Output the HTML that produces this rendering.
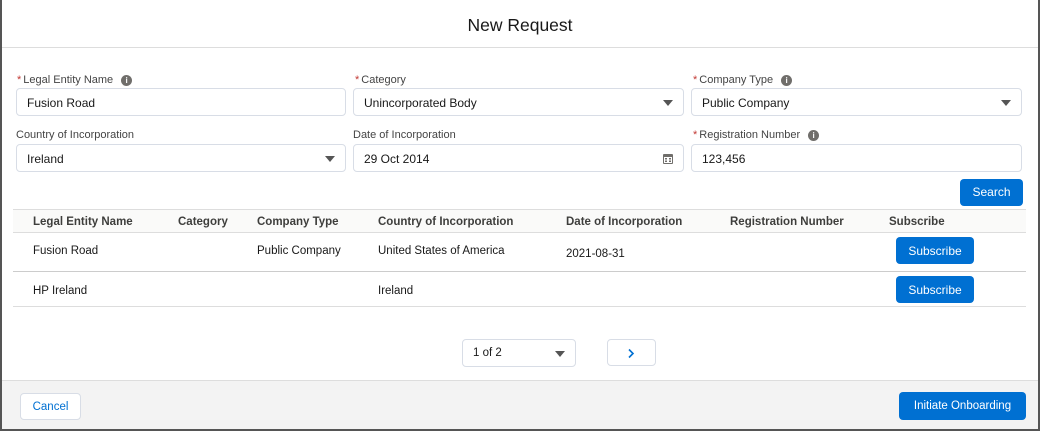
<!DOCTYPE html><html><head><style>
*{box-sizing:border-box;margin:0;padding:0}
body{width:1045px;height:436px;background:#fff;font-family:"Liberation Sans",sans-serif;position:relative;overflow:hidden;color:#3e3e3c}
.a{position:absolute}
.frame{left:0;top:0;width:1040px;height:431px;border:1px solid #555;border-width:0 2px 2px 2px}
.lbl{font-size:11px;color:#444}
.req{color:#c23934;margin-right:2px}
.in{height:28px;border:1px solid #d8dde6;border-radius:4px;font-size:12px;color:#181818;padding:7px 10px;background:#fff}
.info{display:inline-block;width:11px;height:11px;border-radius:50%;background:#706e6b;color:#fff;font-size:8px;font-weight:bold;text-align:center;line-height:11px;margin-left:8px;vertical-align:0}
.tri{position:absolute;right:10px;top:11px;width:0;height:0;border-left:5px solid transparent;border-right:5px solid transparent;border-top:6px solid #555}
.btn{background:#0070d2;color:#fff;border-radius:4px;font-size:12px;text-align:center}
.th{font-size:11.5px;font-weight:bold;color:#3e3e3c;top:216px}
.td{font-size:11.5px;color:#181818}
</style></head><body>
<div class="a frame"></div>
<div class="a" style="left:0;width:1040px;text-align:center;top:15px;font-size:17.5px;color:#181818">New Request</div>
<div class="a" style="left:2px;top:47px;width:1036px;height:1px;background:#ddd"></div>

<div class="a lbl" style="left:17px;top:74px"><span class="req">*</span>Legal Entity Name<span class="info">i</span></div>
<div class="a in" style="left:16px;top:88px;width:330px">Fusion Road</div>
<div class="a lbl" style="left:355px;top:74px"><span class="req">*</span>Category</div>
<div class="a in" style="left:353px;top:88px;width:331px">Unincorporated Body<div class="tri"></div></div>
<div class="a lbl" style="left:693px;top:74px"><span class="req">*</span>Company Type<span class="info">i</span></div>
<div class="a in" style="left:691px;top:88px;width:331px">Public Company<div class="tri"></div></div>

<div class="a lbl" style="left:16px;top:129px">Country of Incorporation</div>
<div class="a in" style="left:16px;top:144px;width:330px">Ireland<div class="tri"></div></div>
<div class="a lbl" style="left:353px;top:129px">Date of Incorporation</div>
<div class="a in" style="left:353px;top:144px;width:331px">29 Oct 2014
<svg class="a" style="right:10px;top:8px" width="10" height="11" viewBox="0 0 10 11"><rect x="0" y="1" width="10" height="10" rx="1" fill="#706e6b"/><rect x="1" y="4" width="8" height="6" fill="#fff"/><rect x="2" y="5" width="2" height="1.5" fill="#706e6b"/><rect x="6" y="5" width="2" height="1.5" fill="#706e6b"/><rect x="2" y="7.5" width="2" height="1.5" fill="#706e6b"/><rect x="6" y="7.5" width="2" height="1.5" fill="#706e6b"/></svg></div>
<div class="a lbl" style="left:693px;top:129px"><span class="req">*</span>Registration Number<span class="info">i</span></div>
<div class="a in" style="left:691px;top:144px;width:331px">123,456</div>

<div class="a btn" style="left:960px;top:179px;width:63px;height:27px;line-height:27px">Search</div>

<div class="a" style="left:13px;top:209px;width:1013px;height:24px;background:#fafaf9;border-top:1px solid #ddd;border-bottom:1px solid #ddd"></div>
<div class="a th" style="left:33px">Legal Entity Name</div>
<div class="a th" style="left:178px">Category</div>
<div class="a th" style="left:257px">Company Type</div>
<div class="a th" style="left:378px">Country of Incorporation</div>
<div class="a th" style="left:566px">Date of Incorporation</div>
<div class="a th" style="left:730px">Registration Number</div>
<div class="a th" style="left:889px">Subscribe</div>

<div class="a td" style="left:33px;top:245px">Fusion Road</div>
<div class="a td" style="left:257px;top:245px">Public Company</div>
<div class="a td" style="left:378px;top:245px">United States of America</div>
<div class="a td" style="left:566px;top:248px">2021-08-31</div>
<div class="a btn" style="left:896px;top:237px;width:78px;height:27px;line-height:28px">Subscribe</div>
<div class="a" style="left:13px;top:271px;width:1013px;height:1px;background:#ccc"></div>
<div class="a td" style="left:33px;top:285px">HP Ireland</div>
<div class="a td" style="left:378px;top:285px">Ireland</div>
<div class="a btn" style="left:896px;top:276px;width:78px;height:27px;line-height:28px">Subscribe</div>
<div class="a" style="left:13px;top:306px;width:1013px;height:1px;background:#ddd"></div>

<div class="a in" style="left:462px;top:339px;width:114px;height:28px;font-size:11.5px">1 of 2<div class="tri"></div></div>
<div class="a in" style="left:607px;top:339px;width:49px;height:27px"><svg class="a" style="left:19px;top:8px" width="8" height="11" viewBox="0 0 8 11"><path d="M2 1.5l4 4-4 4" stroke="#0070d2" stroke-width="1.6" fill="none"/></svg></div>

<div class="a" style="left:2px;top:380px;width:1036px;height:49px;background:#f3f3f3;border-top:1px solid #ddd"></div>
<div class="a" style="left:20px;top:393px;width:61px;height:27px;border:1px solid #d8dde6;border-radius:4px;background:#fff;color:#0070d2;font-size:11.5px;text-align:center;line-height:26px">Cancel</div>
<div class="a btn" style="left:899px;top:392px;width:127px;height:28px;line-height:29px;font-size:11.5px">Initiate Onboarding</div>
</body></html>
